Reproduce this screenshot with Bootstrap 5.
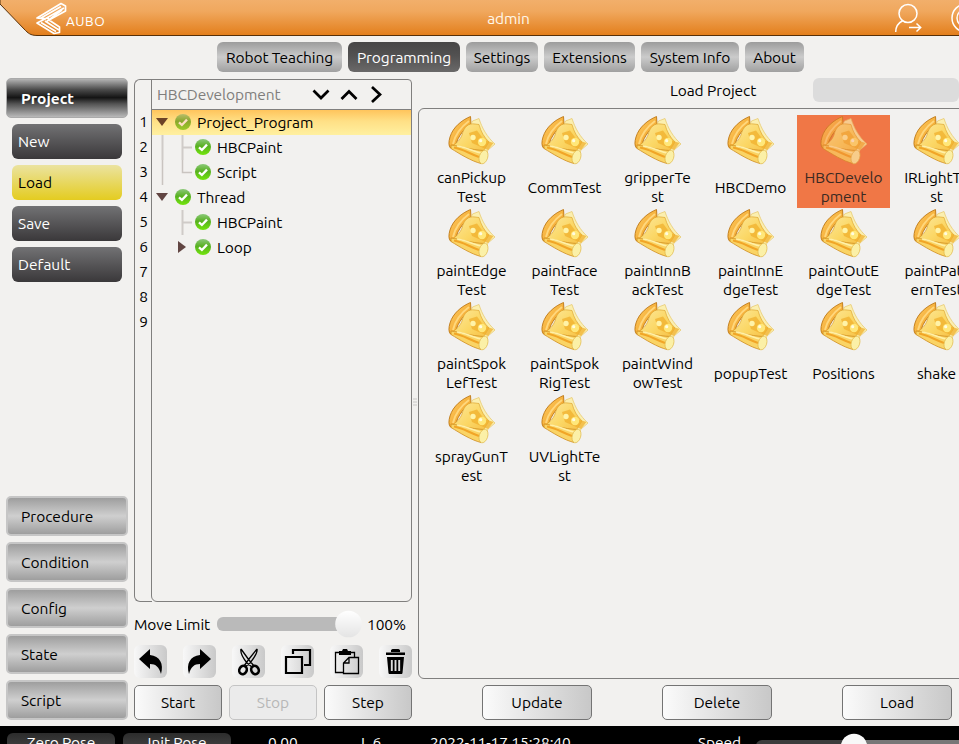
<!DOCTYPE html>
<html lang="en">
<head>
<meta charset="utf-8">
<title>AUBO Programming</title>
<meta name="viewport" content="width=device-width, initial-scale=1">
<link href="https://cdn.jsdelivr.net/npm/bootstrap@5.3.0/dist/css/bootstrap.min.css" rel="stylesheet">
<style>
html,body{height:744px;overflow:hidden}
body{background:#f2f1ef;color:#000;font-family:"Ubuntu","Noto Sans",sans-serif;font-size:15.5px;line-height:19px;letter-spacing:-.1px;width:959px}
.app{width:959px;height:744px;overflow:hidden}
.topbar{height:36px;flex:none}
.topbar-bg{left:0;top:0}
.topbar-grid{display:grid;grid-template-columns:36px 70px 805px 1fr;height:36px}
.brand-name{font-size:13.5px;letter-spacing:.55px;margin:11px 0 0 0;line-height:20px}
.user-name{padding-top:0;color:#fff7ea}
.tabs{height:42px;padding:6px 0 0 217px;gap:6px;flex:none}
.tab-btn{height:30px;border:0;border-radius:6px;padding:0;color:#000;background:linear-gradient(#9c9c9c,#cbcbcb 50%,#a0a0a0);white-space:nowrap;letter-spacing:-.1px}
.tab-btn.current{background:linear-gradient(#474646,#525151 45%,#6a6969);color:#fff}
.work{height:648px;flex:none}
.side{width:134px;padding:0 6px;flex:none}
.group-btn{width:122px;height:40px;border:2px solid #c6c6c6;border-radius:5px;background:linear-gradient(#9e9e9e,#cfcfcf 50%,#9e9e9e);padding:0 13px;text-align:left;color:#000;margin-bottom:6px;display:flex;align-items:center}
.group-btn.open{background:linear-gradient(#b5b5b5,#4a4a4a 28%,#141414 49%,#525252 65%,#b9b9b9);border-color:#aaa;color:#fff;font-weight:700;border-width:1px;padding-left:14px}
.sub-btn{width:110px;height:35px;margin:0 0 6px 6px;border:0;border-radius:6px;background:linear-gradient(#727274,#3a383a);color:#fff;text-align:left;padding:0 0 0 6px}
.sub-btn.current{background:linear-gradient(#ebe3a0,#e4cc20);color:#000}
.groups{margin-top:214px}
.program{width:278px;padding-top:1px;flex:none}
.tree-frame{height:523px}
.line-nos{width:18px;border:1px solid #807f7e;border-right:0;border-radius:6px 0 0 6px;padding-top:29px;text-align:center}
.line-nos div,.tree-row{height:25px;display:flex;align-items:center}
.line-nos div{justify-content:center}
.tree{width:261px;margin-left:-1px;border:1px solid #807f7e;border-radius:0 4px 6px 6px}
.tree-head{height:30px;border-bottom:1px solid #807f7e;color:#807e7c;padding-left:5px;flex:none}
.tree-head span{width:155px}
.tree-row.current{background:linear-gradient(#ffc45c,#ffe086 45%,#fff0a0)}
.tree-row svg{flex:none}
.limit-row{height:44px}
.track{width:145px;margin:0 5px 0 7px}
.tool-btn{width:33px;height:33px;border:0;border-radius:6px;padding:0;background:linear-gradient(90deg,#f8f8f8,#c9c9c9)}
.push-btn{height:35px;border:1px solid #747474;border-radius:5px;background:linear-gradient(90deg,#fbfbfb,#c8c8c8);color:#000;padding:0;width:88px}
.push-btn:disabled{background:#ebebeb;border-color:#c4c4c4;color:#b7b7b7}
.wide-btn{width:110px;flex:none}
.splitter{width:6px;flex:none}
.browser{width:541px;flex:none}
.browser-head{height:30px;padding-left:252px}
.path-box{width:160px;height:24px;border-radius:6px;background:#dcdcdc;margin-left:57px}
.files{height:571px;width:575px;border:1px solid #807f7e;border-radius:6px;padding:6px}
.file-grid{display:grid;grid-template-columns:repeat(6,93px);grid-auto-rows:93px}
.file{text-align:center}
.file svg{display:block;margin:0 auto;height:53px}
.file .cap{height:38px;display:flex;align-items:center;justify-content:center;white-space:nowrap}
.file.chosen{background:#f07746;color:#3a2a22}
.file.chosen svg{opacity:.7}
.actions{gap:70px;padding:6px 0 0 64px;width:600px}
.status{height:18px;background:#000;color:#fff;flex:none;overflow:hidden}
.status-grid{display:grid;grid-template-columns:108px 108px 37px 101px 69px 268px 58px 1fr;padding:7px 0 0 7px;height:40px}
.pose{height:30px;border-radius:6px 6px 0 0;background:linear-gradient(#2c2c2c,#555);text-align:center}
</style>
<script src="https://cdn.jsdelivr.net/npm/bootstrap@5.3.0/dist/js/bootstrap.bundle.min.js"></script>
</head>
<body>
<svg width="0" height="0" class="position-absolute">
<defs>
<linearGradient id="bar" x1="0" y1="0" x2="0" y2="1"><stop offset="0" stop-color="#f2b06d"/><stop offset=".35" stop-color="#f0a85e"/><stop offset="1" stop-color="#e37e1b"/></linearGradient>
<linearGradient id="ok" x1="0" y1="0" x2="0" y2="1"><stop offset="0" stop-color="#8cc97a"/><stop offset=".45" stop-color="#58b021"/><stop offset="1" stop-color="#72e60c"/></linearGradient>
<linearGradient id="okSel" x1="0" y1="0" x2="0" y2="1"><stop offset="0" stop-color="#b9bd6c"/><stop offset=".45" stop-color="#8ba72c"/><stop offset="1" stop-color="#9fcb28"/></linearGradient>
<linearGradient id="leaf" x1="0" y1="0" x2="1" y2="1"><stop offset="0" stop-color="#fce9a0"/><stop offset=".5" stop-color="#fbd765"/><stop offset="1" stop-color="#f5b83c"/></linearGradient>
<linearGradient id="back" x1="0" y1="0" x2="1" y2="1"><stop offset="0" stop-color="#ffd06a"/><stop offset="1" stop-color="#ee9716"/></linearGradient>
<linearGradient id="knob" x1="0" y1="0" x2="0" y2="1"><stop offset="0" stop-color="#fff"/><stop offset="1" stop-color="#e4e4e4"/></linearGradient>
<symbol id="check" viewBox="0 0 16 16"><circle cx="8" cy="8" r="8" fill="url(#ok)"/><path d="M4 8.3 6.9 11 12 5.6" fill="none" stroke="#fff" stroke-width="2.3"/></symbol>
<symbol id="checkSel" viewBox="0 0 16 16"><circle cx="8" cy="8" r="8" fill="url(#okSel)"/><path d="M4 8.3 6.9 11 12 5.6" fill="none" stroke="#ffdfc2" stroke-width="2.3"/></symbol>
<symbol id="proj" viewBox="0 0 48 53">
<path d="M22.5 1.5C14 5 5 12 2 22c-1.500 5-1.500 9 .5 11L7 34C8 25 14 15 23 9Z" fill="url(#back)" stroke="#bd7714" stroke-width=".9"/>
<path d="M5 29C7 20 13 12 21 6" fill="none" stroke="#ffd77c" stroke-width="2"/>
<path d="M24.500 6 31 3.500C34 13 39 22 47 29L40 35 34 48 18 20Z" fill="#fbefb0" stroke="#e6c666" stroke-width=".7"/>
<path d="M3 32C9 28 12 25 14 20c2-8 6-12 13-11l4 .5C33 17 36 22 41 27L36 35 25 44Z" fill="url(#leaf)" stroke="#d99c24" stroke-width=".6"/>
<path d="M21 18 29 15.500 36 25 45.500 28 40 35 24 28Z" fill="#f0b02e" opacity=".75"/>
<path d="M3 30C12 31 23 35 36 35.500L33 48.500C23 46 12 39 3 33.500Z" fill="#fad465" stroke="#cf8d1f" stroke-width=".8"/>
<path d="M6 32.500C15 34 20 38 31 42" fill="none" stroke="#f1a527" stroke-width="2"/>
<path d="M9 31C18 32 24 36 33 38" fill="none" stroke="#fff0a8" stroke-width="1.700"/>
<ellipse cx="35.500" cy="42" rx="4.200" ry="7" transform="rotate(17 35.500 42)" fill="#fbf0a7" stroke="#e2bb50" stroke-width=".7"/>
<circle cx="25" cy="22.500" r="2.700" fill="#fff3a8"/><circle cx="34" cy="27" r="4.200" fill="#ffe779"/><circle cx="32.700" cy="25.700" r="1.600" fill="#fffbe0"/>
</symbol>
</defs>
</svg>
<div class="app d-flex flex-column">
<header class="topbar position-relative">
<svg class="topbar-bg position-absolute" width="959" height="36"><path d="M0 -2V4L25.500 30.500C29.500 34.500 32 35.500 38 35.500H961V-2Z" fill="url(#bar)" stroke="#573008" stroke-width="1"/></svg>
<div class="topbar-grid position-relative text-white">
<svg width="66" height="36" style="margin-left:34px"><g fill="none" stroke="#fff" stroke-width="1.700" stroke-linejoin="round"><path d="M3 18 27 3.500 31.500 6V11L15 20 25.500 27V32.500L20 33.500 3 23 11 19Z"/><path d="M7 18 27 6.500M10 19.500 30 8M12 22 28 10M7 22.500 22 31.500M11 21 25 30M15 18.500 4 18"/></g></svg>
<div class="brand-name" style="padding-left:30px">AUBO</div>
<div class="user-name d-flex align-items-center justify-content-center">admin</div>
<svg width="70" height="36" style="margin-left:-20px" fill="none" stroke="#fff" stroke-width="1.500"><circle cx="17" cy="13.500" r="9"/><path d="M12 20.500C7 23 4.700 26 4.700 32M18 27.500H29.500M25.500 23.500 29.700 27.500 25.500 31.500"/><circle cx="75" cy="18" r="14"/><circle cx="75" cy="18" r="9"/></svg>
</div>
</header>
<nav class="tabs d-flex">
<button class="tab-btn" style="width:125px">Robot Teaching</button><button class="tab-btn current" style="width:112px">Programming</button><button class="tab-btn" style="width:72px">Settings</button><button class="tab-btn" style="width:91px">Extensions</button><button class="tab-btn" style="width:98px">System Info</button><button class="tab-btn" style="width:59px">About</button>
</nav>
<main class="work d-flex">
<aside class="side">
<button class="group-btn open">Project</button>
<button class="sub-btn d-block">New</button><button class="sub-btn current d-block">Load</button><button class="sub-btn d-block">Save</button><button class="sub-btn d-block">Default</button>
<div class="groups"><button class="group-btn">Procedure</button><button class="group-btn">Condition</button><button class="group-btn">Config</button><button class="group-btn">State</button><button class="group-btn">Script</button></div>
</aside>
<section class="program">
<div class="tree-frame d-flex">
<div class="line-nos"><div>1</div><div>2</div><div>3</div><div>4</div><div>5</div><div>6</div><div>7</div><div>8</div><div>9</div></div>
<div class="tree">
<div class="tree-head d-flex align-items-center"><span>HBCDevelopment</span>
<svg width="80" height="28" fill="none" stroke="#000" stroke-width="2.700"><path d="M1.500 9.500 9 17 16.500 9.500M29.500 18 37 10.500 44.500 18M60 6 68 13.500 60 21"/></svg></div>
<div class="tree-row current"><svg width="45" height="25"><path d="M4 8H16L10 16Z" fill="#6c4226"/><use href="#checkSel" x="23" y="4" width="16" height="16"/></svg>Project_Program</div>
<div class="tree-row"><svg width="65" height="25"><path d="M10.500 0V25M30.500 0V25M30 12.500H40" stroke="#cfcbc8" stroke-width="2" fill="none"/><use href="#check" x="43" y="4" width="16" height="16"/></svg>HBCPaint</div>
<div class="tree-row"><svg width="65" height="25"><path d="M10.500 0V25M30.500 0V12.500H40" stroke="#c9c4c0" stroke-width="1.500" fill="none"/><use href="#check" x="43" y="4" width="16" height="16"/></svg>Script</div>
<div class="tree-row"><svg width="45" height="25"><path d="M4 8H16L10 16Z" fill="#614542"/><use href="#check" x="23" y="4" width="16" height="16"/></svg>Thread</div>
<div class="tree-row"><svg width="65" height="25"><path d="M30.500 0V25M30 12.500H40" stroke="#cfcbc8" stroke-width="2" fill="none"/><use href="#check" x="43" y="4" width="16" height="16"/></svg>HBCPaint</div>
<div class="tree-row"><svg width="65" height="25"><path d="M26 6V18L34 12Z" fill="#614542"/><use href="#check" x="43" y="4" width="16" height="16"/></svg>Loop</div>
</div>
</div>
<div class="limit-row d-flex align-items-center"><span class="text-nowrap">Move Limit</span>
<svg class="track" width="145" height="28"><rect x="0" y="7" width="144" height="14" rx="6" fill="#bababa"/><circle cx="131.500" cy="14" r="13.300" fill="url(#knob)"/></svg><span>100%</span></div>
<div class="d-flex justify-content-between" style="margin-top:-1px">
<button class="tool-btn"><svg width="33" height="33"><path d="M5 14 16 4V10C26 11 30 19 27 29 25 22 22 19 16 19V24Z"/></svg></button>
<button class="tool-btn"><svg width="33" height="33"><path d="M28 14 17 4V10C7 11 3 19 6 29 8 22 11 19 17 19V24Z"/></svg></button>
<button class="tool-btn"><svg width="33" height="33" fill="none" stroke="#000"><path d="M9 4C8 8 11 13 15 18L20 22M9 4 17 15 22 21M25 4C26 8 22 13 18 18L13 22M25 4 17 14 12 21" stroke-width="1.300"/><ellipse cx="11" cy="25" rx="3.600" ry="4.300" transform="rotate(30 11 25)" stroke-width="2.600"/><ellipse cx="23" cy="25" rx="3.600" ry="4.300" transform="rotate(-30 23 25)" stroke-width="2.600"/></svg></button>
<button class="tool-btn"><svg width="33" height="33" fill="none" stroke="#000" stroke-width="2.200"><path d="M12 9V5H29V20H23M5 12H21V28H5Z"/></svg></button>
<button class="tool-btn"><svg width="33" height="33" fill="none" stroke="#000" stroke-width="1.300"><path d="M13 27.500H5.500V7.500H24.500V12M19 12.500H28.500V28.500H13.500V18ZM19 12.500V18H13.500"/><path d="M9 10V6H12L13 4H17L18 6H21V10Z" fill="#000" stroke="none"/></svg></button>
<button class="tool-btn"><svg width="33" height="33"><path d="M7 7.500H26V10H7ZM12 7V5L13.500 4H19.500L21 5V7ZM8 12H25L23.500 28C23.400 29 22.500 29 22 29H11C10.400 29 9.600 29 9.500 28Z"/><path d="M12.800 15V26M16.500 15V26M20.200 15V26" stroke="#ddd" stroke-width="1.900"/></svg></button>
</div>
<div class="d-flex justify-content-between" style="margin-top:7px"><button class="push-btn">Start</button><button class="push-btn" disabled>Stop</button><button class="push-btn">Step</button></div>
</section>
<div class="splitter d-flex align-items-center justify-content-center"><svg width="4" height="8"><path d="M0 1H4M0 4H4M0 7H4" stroke="#c9c8c6" stroke-width="1"/></svg></div>
<section class="browser">
<div class="browser-head d-flex"><span class="text-nowrap" style="padding-top:3px">Load Project</span><div class="path-box"></div></div>
<div class="files"><div class="file-grid" id="fileGrid"></div></div>
<div class="actions d-flex"><button class="push-btn wide-btn">Update</button><button class="push-btn wide-btn">Delete</button><button class="push-btn wide-btn">Load</button></div>
</section>
</main>
<footer class="status"><div class="status-grid">
<div class="pose">Zero Pose</div><div class="pose" style="margin-left:8px;width:108px">Init Pose</div><div></div><div style="padding-left:8px">0.00</div><div>I_6</div><div>2022-11-17 15:28:40</div><div>Speed</div>
<svg width="210" height="26"><rect x="0" y="7" width="220" height="14" rx="6" fill="#3c3c3c"/><rect x="98" y="7" width="110" height="14" fill="#777"/><circle cx="98" cy="14" r="13.300" fill="#f8f8f8"/></svg>
</div></footer>
</div>
<script>
const files = ["canPickup|Test","CommTest","gripperTe|st","HBCDemo","HBCDevelo|pment","IRLightTe|st",
"paintEdge|Test","paintFace|Test","paintInnB|ackTest","paintInnE|dgeTest","paintOutE|dgeTest","paintPatt|ernTest",
"paintSpok|LefTest","paintSpok|RigTest","paintWind|owTest","popupTest","Positions","shake",
"sprayGunT|est","UVLightTe|st"];
document.getElementById("fileGrid").innerHTML = files.map((f, i) =>
`<div class="file${i === 4 ? " chosen" : ""}"><svg width="48"><use href="#proj" width="48" height="53"/></svg><div class="cap"><span>${f.replace("|", "<br>")}</span></div></div>`).join("");
</script>
</body>
</html>
